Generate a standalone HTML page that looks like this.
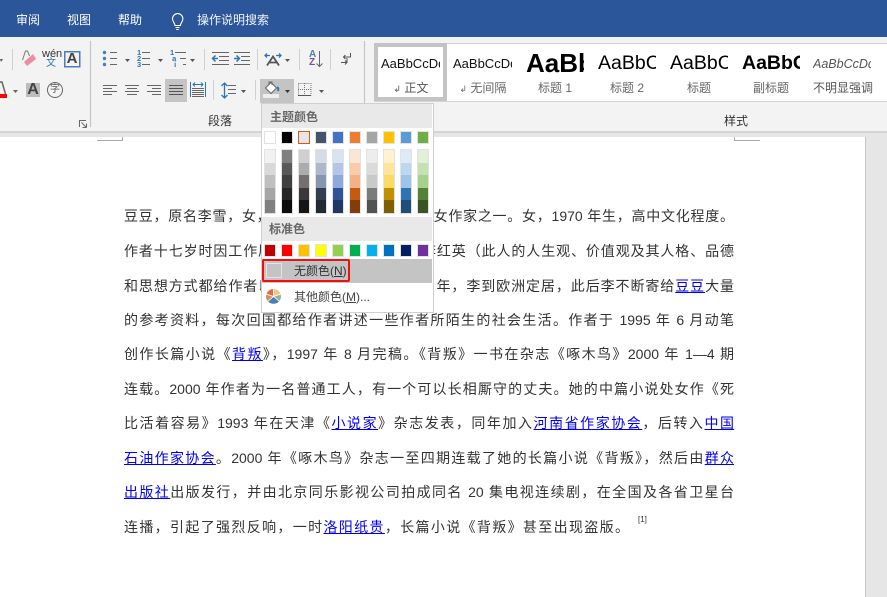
<!DOCTYPE html>
<html lang="zh"><head><meta charset="utf-8"><style>
html,body{margin:0;padding:0}
body{width:887px;height:597px;position:relative;overflow:hidden;background:#e6e6e6;font-family:"Liberation Sans","Noto Sans CJK SC",sans-serif}
.a,.l,.s,.t{position:absolute}
.t{white-space:nowrap;line-height:16px}
.l{left:124px;width:610px;height:22px;line-height:22px;font-size:14px;color:#333;text-align:justify;text-align-last:justify;white-space:nowrap}
.l a{color:#0000ee;text-decoration:underline}
.s{width:10px;height:11px;border:1px solid #e2e2e2}
.sh{position:absolute;width:10px;border:1px solid #e2e2e2;top:149px;height:63px}
.sh i{display:block;height:12.6px}
.sty{position:absolute;top:48px;height:26px;line-height:26px;overflow:hidden;white-space:nowrap;color:#111}
.cap{position:absolute;top:80px;height:16px;line-height:16px;font-size:12px;color:#666;text-align:center;white-space:nowrap}
.cap b{font-weight:normal;font-size:9px}
svg{position:absolute;overflow:visible}
</style></head><body>
<div class="a" style="left:0;top:137px;width:865px;height:460px;background:#fff;border-right:1px solid #c6c6c6"></div>
<div class="a" style="left:0;top:37px;width:887px;height:94px;background:#f3f3f3;border-bottom:2px solid #d4d4d4"></div>
<div class="a" style="left:0;top:0;width:887px;height:37px;background:#2b579a"></div>
<div class="t" style="left:16px;top:12px;font-size:12px;color:#fff">审阅</div>
<div class="t" style="left:67px;top:12px;font-size:12px;color:#fff">视图</div>
<div class="t" style="left:118px;top:12px;font-size:12px;color:#fff">帮助</div>
<div class="t" style="left:197px;top:12px;font-size:12px;color:#f0f4fa">操作说明搜索</div>
<svg style="left:0;top:0" width="887" height="137" fill="none">
<path d="M175 25.500c0-2.500-2.500-3.600-2.500-6.700a5.200 5.200 0 0 1 10.400 0c0 3.100-2.500 4.200-2.500 6.700zM175.500 27.500h4M176.300 29.500h2.400" stroke="#fff" stroke-width="1.100"/>
<path d="M90.500 41v86M364.500 41v86" stroke="#c6c6c6" stroke-width="1.200"/>
<path d="M12.500 49v21M204.500 49v21M257.500 49v21M299.500 49v21M330.500 49v21M213.500 80v20M255.500 80v20" stroke="#d0d0d0"/>
<path d="M0 59h3l-2 3z" fill="#555"/>
<!-- eraser -->
<path d="M22.500 60l3-9h2l2 5" stroke="#777"/>
<path d="M24 62l9-8 3 5-9 7z" fill="#ee8c9c"/>
<rect x="64.750" y="51.750" width="15" height="15" stroke="#4a7ebb" stroke-width="1.500"/>
<path d="M0 94h7v4H0z" fill="#f00"/><path d="M0 82h2l3.500 12" stroke="#666" stroke-width="1.500"/>
<path d="M13 90h5l-2.500 3z" fill="#666"/>
<rect x="26" y="83" width="14" height="14" fill="#bdbdbd"/>
<circle cx="55" cy="90" r="7.500" stroke="#666"/>
<path d="M79.500 127v-6.500H86M86.500 127.500h-4M86.500 127.500v-4M86 127l-4.500-4.500" stroke="#666"/>
<!-- bullets -->
<g fill="#4a7ebb"><circle cx="104.500" cy="52.500" r="1.700"/><circle cx="104.500" cy="58.500" r="1.700"/><circle cx="104.500" cy="64.500" r="1.700"/></g>
<path d="M110 52.500h7M110 58.500h7M110 64.500h7M142 52.500h8M142 58.500h8M142 64.500h8M175 52.500h11M180 58.500h6M183 64.500h3" stroke="#666"/>
<path d="M125 59h5l-2.500 3zM158 59h5l-2.500 3zM190 59h5l-2.500 3zM285 59h5l-2.500 3zM241 90h5l-2.500 3zM319 90h5l-2.500 3z" fill="#555"/>
<!-- indents -->
<path d="M212 52.500h17M219 56.500h10M219 60.500h10M212 64.500h17M234 52.500h16M241 56.500h9M241 60.500h9M234 64.500h16" stroke="#666"/>
<path d="M218 58.500h-5m2.500-3l-3 3 3 3" stroke="#2e75b6" stroke-width="1.500"/><path d="M234 58.500h5m-2.500-3l3 3-3 3" stroke="#2e75b6" stroke-width="1.500"/>
<!-- AA spacing -->
<path d="M267 65.500l6-9 6 9M269 62.500h8" stroke="#555" stroke-width="1.800"/>
<path d="M265 55.500h5m-3-2l-2 2 2 2M281 55.500h-5m3-2l2 2-2 2" stroke="#2e75b6" stroke-width="1.300"/>
<!-- sort -->
<path d="M319.500 51v15.500m-3-3l3 3 3-3" stroke="#666"/>
<!-- return -->
<path d="M350.500 53v4h-7m2-2l-2 2 2 2M341 62.500h6m-2-2l2 2-2 2M347 62v-4" stroke="#555"/>
<!-- align -->
<path d="M103 85.500h14M103 88.500h9M103 91.500h14M103 94.500h9M125 85.500h14M127 88.500h10M125 91.500h14M127 94.500h10M147 85.500h14M152 88.500h9M147 91.500h14M152 94.500h9" stroke="#666"/>
<rect x="165" y="79" width="22" height="23" fill="#c4c4c4"/>
<path d="M169 85.500h14M169 88.500h14M169 91.500h14M169 94.500h14" stroke="#555"/>
<path d="M190.500 82v15M205.500 82v15" stroke="#2e75b6"/>
<path d="M193 84.500h10m-8-2l-2 2 2 2m6-4l2 2-2 2" stroke="#2e75b6"/>
<path d="M192 88.500h12M192 90.500h12M192 92.500h12M192 94.500h12M192 96.500h12" stroke="#666"/>
<!-- line spacing -->
<path d="M224.500 83v15m-3-12l3-3 3 3m-6 9l3 3 3-3" stroke="#2e75b6" stroke-width="1.300"/>
<path d="M228 85.500h8M228 89.500h8M228 93.500h8" stroke="#666"/>
<!-- shading -->
<rect x="260" y="79" width="34" height="24" fill="#c4c4c4"/>
<rect x="263" y="94" width="16" height="4" fill="#eee"/>
<path d="M265.500 88l5.500-5.500 5.500 5.500-5.500 5.500z" fill="#fff" stroke="#666"/><path d="M269 85v-3h3v3" stroke="#666"/>
<path d="M277 87.500c1.500 0 1.500 1.500 1 3.500" stroke="#2e75b6" stroke-width="2"/>
<path d="M285 90h5l-2.500 3z" fill="#333"/>
<!-- borders -->
<path d="M298.500 83.500h12.500v12M298.500 83.500v12M298 89.500h13M304.500 83v12" stroke="#777" stroke-dasharray="1 1"/><path d="M298 95.500h13" stroke="#555"/>
</svg>
<div class="t" style="left:42px;top:49px;font-size:11px;line-height:11px;color:#333">wén</div>
<div class="t" style="left:46px;top:58px;font-size:10px;line-height:11px;color:#2e75b6">文</div>
<div class="t" style="left:64px;top:51px;width:16px;text-align:center;font-size:15px;color:#444;font-weight:bold">A</div>
<div class="t" style="left:26px;top:82px;width:14px;text-align:center;font-size:16px;color:#444;font-weight:bold">A</div>
<div class="t" style="left:50px;top:84px;font-size:10px;line-height:12px;color:#555">字</div>
<div class="t" style="left:137px;top:49.500px;font-size:7.500px;line-height:6px;color:#2e75b6;font-weight:bold">1<br>2<br>3</div>
<div class="t" style="left:170px;top:49.500px;font-size:7.500px;line-height:6px;color:#2e75b6;font-weight:bold">1<br>&nbsp;a<br>&nbsp;&nbsp;i</div>
<div class="t" style="left:309px;top:51px;font-size:10px;line-height:8px;font-weight:bold;color:#4a7ebb">A<br><span style="color:#7b4fa0">Z</span></div>
<div class="t" style="left:208px;top:113px;font-size:12px;color:#333">段落</div>
<div class="t" style="left:724px;top:113px;font-size:12px;color:#333">样式</div>

<!-- style gallery -->
<div class="a" style="left:374px;top:43px;width:513px;height:57px;background:#fff;border-top:1px solid #d4d4d4;border-bottom:1px solid #d4d4d4"></div>
<div class="a" style="left:374px;top:43px;width:65px;height:50px;border:4px solid #c4c4c4;background:#fff"></div>
<div class="sty" style="left:381px;top:51px;width:59px;font-size:13px">AaBbCcDd</div>
<div class="sty" style="left:453px;top:51px;width:59px;font-size:13px">AaBbCcDd</div>
<div class="sty" style="left:526px;top:47px;width:58px;height:32px;line-height:32px;font-size:26px;font-weight:bold;color:#000">AaBb</div>
<div class="sty" style="left:598px;top:50px;width:58px;font-size:19.500px;color:#000">AaBbC</div>
<div class="sty" style="left:670px;top:50px;width:58px;font-size:19.500px;color:#000">AaBbC</div>
<div class="sty" style="left:742px;top:50px;width:58px;font-size:19.500px;font-weight:bold;color:#000">AaBbC</div>
<div class="sty" style="left:813px;top:51px;width:58px;font-size:12.500px;font-style:italic;color:#555">AaBbCcDd</div>
<div class="cap" style="left:375px;width:72px;color:#555"><b>↲</b> 正文</div>
<div class="cap" style="left:447px;width:72px"><b>↲</b> 无间隔</div>
<div class="cap" style="left:519px;width:72px">标题 1</div>
<div class="cap" style="left:591px;width:72px">标题 2</div>
<div class="cap" style="left:663px;width:72px">标题</div>
<div class="cap" style="left:735px;width:72px">副标题</div>
<div class="cap" style="left:807px;width:72px;color:#555">不明显强调</div>

<div class="a" style="left:97px;top:137px;width:25px;height:3px;border-right:1px solid #aaa;border-bottom:1px solid #aaa"></div>
<div class="a" style="left:734px;top:137px;width:25px;height:3px;border-left:1px solid #aaa;border-bottom:1px solid #aaa"></div>

<!-- document text -->
<div class="l" style="top:205px">豆豆，原名李雪，女，当代作家，最具影响力的女作家之一。女，1970 年生，高中文化程度。</div>
<div class="l" style="top:240px">作者十七岁时因工作原因认识了好友张，好友李红英（此人的人生观、价值观及其人格、品德</div>
<div class="l" style="top:275px">和思想方式都给作者以深刻的人生影响）。1995 年，李到欧洲定居，此后李不断寄给<a>豆豆</a>大量</div>
<div class="l" style="top:309px">的参考资料，每次回国都给作者讲述一些作者所陌生的社会生活。作者于 1995 年 6 月动笔</div>
<div class="l" style="top:343px">创作长篇小说《<a>背叛</a>》，1997 年 8 月完稿。《背叛》一书在杂志《啄木鸟》2000 年 1—4 期</div>
<div class="l" style="top:378px">连载。2000 年作者为一名普通工人，有一个可以长相厮守的丈夫。她的中篇小说处女作《死</div>
<div class="l" style="top:412px">比活着容易》1993 年在天津《<a>小说家</a>》杂志发表，同年加入<a>河南省作家协会</a>，后转入<a>中国</a></div>
<div class="l" style="top:447px"><a>石油作家协会</a>。2000 年《啄木鸟》杂志一至四期连载了她的长篇小说《背叛》，然后由<a>群众</a></div>
<div class="l" style="top:481px"><a>出版社</a>出版发行，并由北京同乐影视公司拍成同名 20 集电视连续剧，在全国及各省卫星台</div>
<div class="l" style="top:516px;width:505px">连播，引起了强烈反响，一时<a>洛阳纸贵</a>，长篇小说《背叛》甚至出现盗版。</div>
<div class="t" style="left:638px;top:514px;font-size:8px;line-height:12px;color:#333">[1]</div>

<!-- dropdown -->
<div class="a" style="left:261px;top:103px;width:171px;height:208px;background:#fff;border:1px solid #d0d0d0"></div>
<div class="a" style="left:262px;top:104px;width:170px;height:24px;background:#e9e9e9"></div>
<div class="t" style="left:270px;top:109px;font-size:12px;color:#666;font-weight:bold">主题颜色</div>
<div class="s" style="left:264px;top:131px;background:#fff"></div>
<div class="s" style="left:281px;top:131px;background:#000"></div>
<div class="s" style="left:298px;top:131px;background:#e7e6e6;border-color:#e2571e"></div>
<div class="s" style="left:315px;top:131px;background:#44546a"></div>
<div class="s" style="left:332px;top:131px;background:#4472c4"></div>
<div class="s" style="left:349px;top:131px;background:#ed7d31"></div>
<div class="s" style="left:366px;top:131px;background:#a5a5a5"></div>
<div class="s" style="left:383px;top:131px;background:#ffc000"></div>
<div class="s" style="left:400px;top:131px;background:#5b9bd5"></div>
<div class="s" style="left:417px;top:131px;background:#70ad47"></div>

<div class="sh" style="left:264px"><i style="background:#f2f2f2"></i><i style="background:#d9d9d9"></i><i style="background:#bfbfbf"></i><i style="background:#a6a6a6"></i><i style="background:#808080"></i></div>
<div class="sh" style="left:281px"><i style="background:#808080"></i><i style="background:#595959"></i><i style="background:#404040"></i><i style="background:#262626"></i><i style="background:#0d0d0d"></i></div>
<div class="sh" style="left:298px"><i style="background:#d0cece"></i><i style="background:#aeabab"></i><i style="background:#757070"></i><i style="background:#3a3838"></i><i style="background:#171616"></i></div>
<div class="sh" style="left:315px"><i style="background:#d6dce4"></i><i style="background:#adb9ca"></i><i style="background:#8496b0"></i><i style="background:#323f4f"></i><i style="background:#222a35"></i></div>
<div class="sh" style="left:332px"><i style="background:#d9e2f3"></i><i style="background:#b4c6e7"></i><i style="background:#8eaadb"></i><i style="background:#2f5496"></i><i style="background:#1f3864"></i></div>
<div class="sh" style="left:349px"><i style="background:#fbe5d5"></i><i style="background:#f7cbac"></i><i style="background:#f4b183"></i><i style="background:#c55a11"></i><i style="background:#833c0b"></i></div>
<div class="sh" style="left:366px"><i style="background:#ededed"></i><i style="background:#dbdbdb"></i><i style="background:#c9c9c9"></i><i style="background:#7b7b7b"></i><i style="background:#525252"></i></div>
<div class="sh" style="left:383px"><i style="background:#fff2cc"></i><i style="background:#fee599"></i><i style="background:#ffd965"></i><i style="background:#bf9000"></i><i style="background:#7f6000"></i></div>
<div class="sh" style="left:400px"><i style="background:#deeaf6"></i><i style="background:#bdd7ee"></i><i style="background:#9dc3e6"></i><i style="background:#2e74b5"></i><i style="background:#1e4e79"></i></div>
<div class="sh" style="left:417px"><i style="background:#e2efd9"></i><i style="background:#c5e0b3"></i><i style="background:#a8d08d"></i><i style="background:#538135"></i><i style="background:#375623"></i></div>

<div class="a" style="left:262px;top:217px;width:170px;height:24px;background:#e9e9e9"></div>
<div class="t" style="left:269px;top:221px;font-size:12px;color:#666;font-weight:bold">标准色</div>
<div class="s" style="left:264px;top:244px;background:#c00000"></div>
<div class="s" style="left:281px;top:244px;background:#ff0000"></div>
<div class="s" style="left:298px;top:244px;background:#ffc000"></div>
<div class="s" style="left:315px;top:244px;background:#ffff00"></div>
<div class="s" style="left:332px;top:244px;background:#92d050"></div>
<div class="s" style="left:349px;top:244px;background:#00b050"></div>
<div class="s" style="left:366px;top:244px;background:#00b0f0"></div>
<div class="s" style="left:383px;top:244px;background:#0070c0"></div>
<div class="s" style="left:400px;top:244px;background:#002060"></div>
<div class="s" style="left:417px;top:244px;background:#7030a0"></div>

<div class="a" style="left:262px;top:259px;width:170px;height:24px;background:#c4c4c4"></div>
<div class="a" style="left:262px;top:259px;width:84px;height:19px;border:2px solid #f01010;border-radius:2px"></div>
<div class="a" style="left:266px;top:263px;width:14px;height:13px;border:1px solid #e4e4e4"></div>
<div class="t" style="left:294px;top:263px;font-size:12px;color:#333">无颜色(<u>N</u>)</div>
<svg style="left:265px;top:288px" width="17" height="17">
<g stroke="#fff" stroke-width="0.800">
<path d="M8.500 8.500V.500A8 8 0 0 1 16 6z" fill="#e9c98a"/>
<path d="M8.500 8.500L16 6a8 8 0 0 1-1.500 7.500z" fill="#8fb59a"/>
<path d="M8.500 8.500L14.500 13.500a8 8 0 0 1-12 0z" fill="#4d7eb5"/>
<path d="M8.500 8.500L2.500 13.500A8 8 0 0 1 1 6z" fill="#d98a5a"/>
<path d="M8.500 8.500L1 6A8 8 0 0 1 8.500.500z" fill="#d9704a"/>
</g>
</svg>
<div class="t" style="left:294px;top:289px;font-size:12px;color:#444">其他颜色(<u>M</u>)...</div>
</body></html>
